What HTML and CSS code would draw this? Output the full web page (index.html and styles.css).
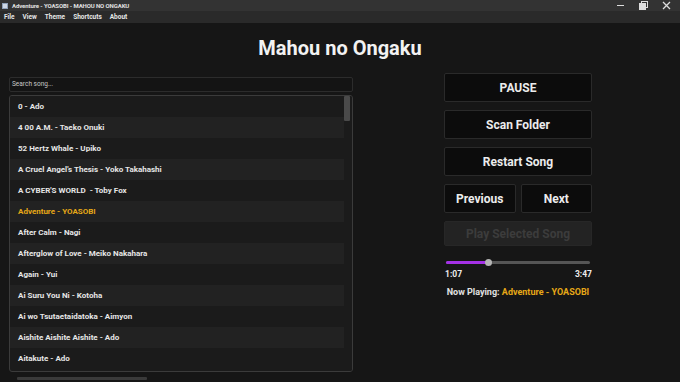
FILE: index.html
```html
<!DOCTYPE html>
<html>
<head>
<meta charset="utf-8">
<link rel="stylesheet" href="styles.css">
</head>
<body>
<div class="window">
  <div class="titlebar">
    <div class="title-left">
      <span class="app-icon"></span>
      <span class="title-text">Adventure - YOASOBI - MAHOU NO ONGAKU</span>
    </div>
    <div class="win-controls">
      <span class="wc"><svg width="9" height="9" viewBox="0 0 9 9"><path d="M1 4.5H8" stroke="#ddd" stroke-width="1"/></svg></span>
      <span class="wc"><svg width="9" height="9" viewBox="0 0 9 9"><rect x="2.5" y="0.5" width="6" height="6" fill="none" stroke="#ddd"/><rect x="0.5" y="2.5" width="6" height="6" fill="#ddd" stroke="#ddd"/></svg></span>
      <span class="wc"><svg width="9" height="9" viewBox="0 0 9 9"><path d="M1 1L8 8M8 1L1 8" stroke="#ddd" stroke-width="1.3"/></svg></span>
    </div>
  </div>
  <div class="menubar">
    <span>File</span><span>View</span><span>Theme</span><span>Shortcuts</span><span>About</span>
  </div>
  <h1 class="heading">Mahou no Ongaku</h1>
  <div class="content">
    <div class="left">
      <div class="search">Search song...</div>
      <div class="list">
        <div class="rows">
          <div class="row">0 - Ado</div>
          <div class="row">4 00 A.M. - Taeko Onuki</div>
          <div class="row">52 Hertz Whale - Upiko</div>
          <div class="row">A Cruel Angel's Thesis - Yoko Takahashi</div>
          <div class="row">A CYBER'S WORLD &nbsp;- Toby Fox</div>
          <div class="row current">Adventure - YOASOBI</div>
          <div class="row">After Calm - Nagi</div>
          <div class="row">Afterglow of Love - Meiko Nakahara</div>
          <div class="row">Again - Yui</div>
          <div class="row">Ai Suru You Ni - Kotoha</div>
          <div class="row">Ai wo Tsutaetaidatoka - Aimyon</div>
          <div class="row">Aishite Aishite Aishite - Ado</div>
          <div class="row">Aitakute - Ado</div>
        </div>
        <div class="vscroll"><div class="vthumb"></div></div>
      </div>
      <div class="hscroll"></div>
    </div>
    <div class="right">
      <div class="btn">PAUSE</div>
      <div class="btn">Scan Folder</div>
      <div class="btn">Restart Song</div>
      <div class="btn-pair">
        <div class="btn">Previous</div>
        <div class="btn">Next</div>
      </div>
      <div class="btn disabled">Play Selected Song</div>
      <div class="slider">
        <div class="track"><div class="fill" style="width:29.5%"></div><div class="knob" style="left:29.5%"></div></div>
      </div>
      <div class="times"><span>1:07</span><span>3:47</span></div>
      <div class="now">Now Playing: <span class="accent">Adventure - YOASOBI</span></div>
    </div>
  </div>
</div>
</body>
</html>
```
FILE: styles.css
```css
* { box-sizing: border-box; }
html, body { margin: 0; padding: 0; }
body {
  width: 680px;
  height: 382px;
  overflow: hidden;
  background: #161616;
  font-family: Roboto, "Liberation Sans", sans-serif;
  color: #e8e8e8;
}
.window { display: flex; flex-direction: column; height: 382px; }
.titlebar {
  height: 11px;
  background: #333333;
  display: flex;
  justify-content: space-between;
  align-items: center;
  padding-left: 2px;
}
.title-left { display: flex; align-items: center; gap: 4px; }
.app-icon {
  width: 6px; height: 6px;
  background: #cfd8e6;
  border: 1px solid #8fa0b8;
}
.title-text { font-size: 6px; color: #e0e0e0; font-weight: bold; letter-spacing: -0.1px; }
.win-controls { display: flex; height: 11px; align-items: center; padding-right: 2px; }
.wc { width: 23px; height: 11px; display: flex; align-items: center; justify-content: center; }
.wc svg { display: block; }
.menubar {
  height: 12px;
  background: #2a2a2a;
  display: flex;
  align-items: center;
  padding-left: 4px;
  gap: 8px;
  font-size: 6.5px;
  font-weight: bold;
  color: #e6e6e6;
}
.heading {
  margin: 13px 0 0;
  height: 24px;
  line-height: 24px;
  text-align: center;
  font-size: 20px;
  font-weight: bold;
  color: #f2f2f2;
}
.content {
  margin-top: 13px;
  display: flex;
  flex: 1;
}
.left {
  width: 353px;
  padding-left: 9px;
  padding-top: 4px;
  display: flex;
  flex-direction: column;
}
.search {
  height: 15px;
  border: 1px solid #2c2c2c;
  border-radius: 2px;
  background: #141414;
  font-size: 6.5px;
  color: #c8c8c8;
  padding-left: 2px;
  line-height: 13px;
}
.list {
  margin-top: 3px;
  height: 277px;
  border: 1px solid #3b3b3b;
  border-radius: 3px;
  background: #1b1b1b;
  display: flex;
  overflow: hidden;
}
.rows { flex: 1; }
.row {
  height: 21px;
  line-height: 21px;
  padding-left: 8px;
  font-size: 8px;
  font-weight: bold;
  color: #e6e6e6;
  background: #1b1b1b;
}
.row:nth-child(even) { background: #222222; }
.row.current { color: #e6a817; }
.vscroll { width: 8px; background: #1b1b1b; }
.vthumb { width: 6px; height: 25px; background: #4a4a4a; border-radius: 1px; }
.hscroll {
  margin: 5px 0 0 8px;
  width: 130px;
  height: 3px;
  background: #3a3a3a;
  border-radius: 1px;
}
.right {
  margin-left: 91px;
  width: 148px;
  display: flex;
  flex-direction: column;
}
.btn {
  height: 29px;
  margin-bottom: 8px;
  background: #0c0c0c;
  border: 1px solid #2a2a2a;
  border-radius: 2px;
  display: flex;
  align-items: center;
  justify-content: center;
  font-size: 12px;
  font-weight: bold;
  color: #ececec;
}
.btn-pair { display: flex; gap: 5px; }
.btn-pair .btn { flex: 1; }
.btn.disabled {
  height: 25px;
  background: #232323;
  border-color: #272727;
  color: #3c3c3c;
  margin-bottom: 0;
}
.slider { margin-top: 15px; padding: 0 2px; }
.track {
  position: relative;
  height: 3px;
  background: #555555;
  border-radius: 2px;
}
.fill { height: 3px; background: #a431e6; border-radius: 2px; }
.knob {
  position: absolute;
  top: -2px;
  width: 7px; height: 7px;
  margin-left: -3px;
  border-radius: 50%;
  background: #b4b4b4;
}
.times {
  margin-top: 5px;
  display: flex;
  justify-content: space-between;
  font-size: 8.5px;
  font-weight: bold;
  color: #ececec;
  padding-left: 1px;
}
.now {
  margin-top: 8px;
  text-align: center;
  font-size: 9px;
  font-weight: bold;
  color: #e2e2e2;
}
.accent { color: #e6a817; }
```
